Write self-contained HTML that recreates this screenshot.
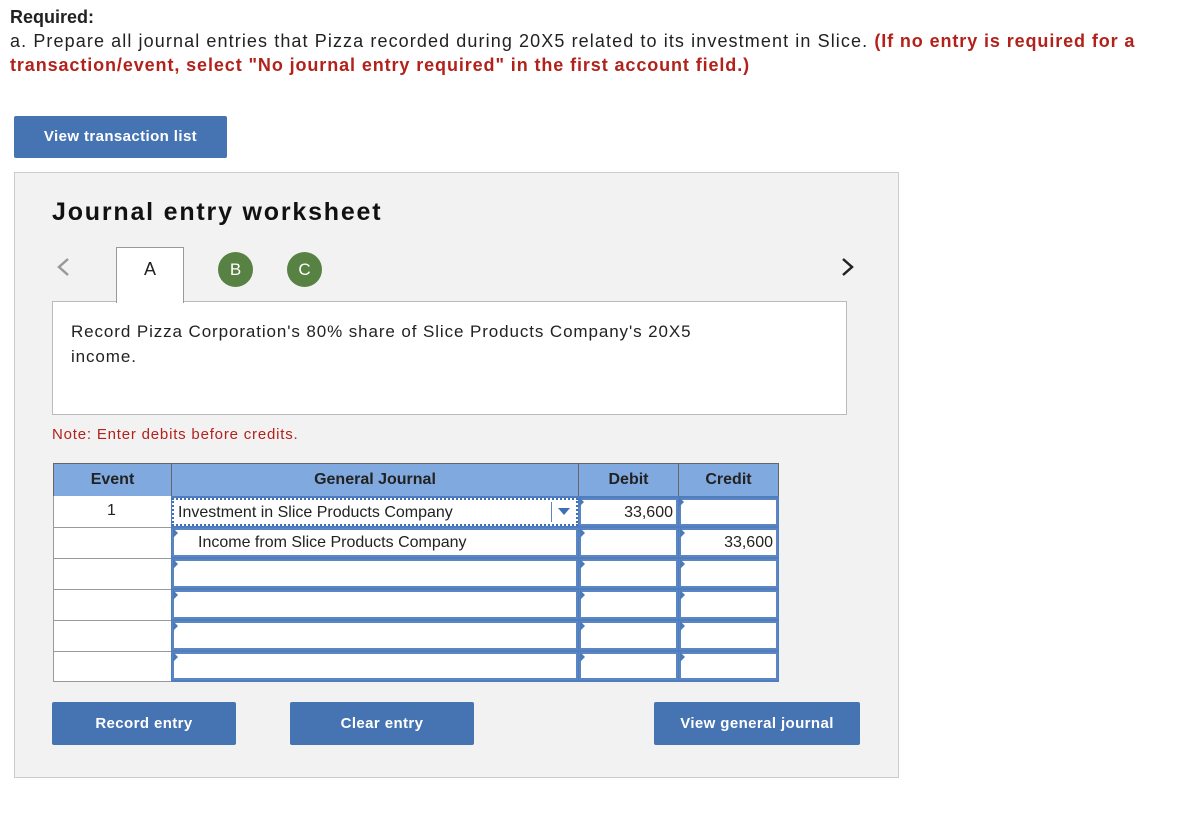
<!DOCTYPE html>
<html><head><style>
*{box-sizing:border-box;margin:0;padding:0}
body{width:1192px;height:818px;background:#fff;font-family:"Liberation Sans",sans-serif;position:relative;overflow:hidden;color:#222}
.a{position:absolute}
.req{left:10px;top:5px;font-size:18px;line-height:24px;letter-spacing:1.1px;white-space:nowrap}
.red{color:#b3211b;font-weight:bold;letter-spacing:0.9px}
.btn{background:#4674b3;color:#fff;font-weight:bold;font-size:15px;text-align:center;border-radius:2px;letter-spacing:0.4px}
.panel{left:14px;top:172px;width:885px;height:606px;background:#f2f2f2;border:1px solid #ccc}
.inp{position:absolute;background:#fff;border:2px solid #5b86c4;font-size:16px;line-height:26px}
.tri{position:absolute;width:0;height:0;border-top:5px solid transparent;border-bottom:5px solid transparent;border-left:5px solid #4a7ab8}
.hd{position:absolute;top:463px;height:34px;background:#80aadf;border:1px solid #666;font-weight:bold;font-size:16px;text-align:center;line-height:32px}
</style></head><body>
<div class="a req"><b style="letter-spacing:0">Required:</b><br>a. Prepare all journal entries that Pizza recorded during 20X5 related to its investment in Slice. <span class="red">(If no entry is required for a</span><br><span class="red">transaction/event, select "No journal entry required" in the first account field.)</span></div>
<div class="a btn" style="left:14px;top:116px;width:213px;height:42px;line-height:42px">View transaction list</div>
<div class="a panel"></div>
<div class="a" style="left:52px;top:198px;font-size:25px;font-weight:bold;color:#111;letter-spacing:1.8px">Journal entry worksheet</div>
<svg class="a" style="left:55px;top:257px" width="16" height="20"><path d="M13 2 L4 10 L13 18" fill="none" stroke="#999" stroke-width="2.5"/></svg>
<svg class="a" style="left:840px;top:257px" width="16" height="20"><path d="M3 2 L12 10 L3 18" fill="none" stroke="#222" stroke-width="2.5"/></svg>
<div class="a" style="left:52px;top:301px;width:795px;height:114px;background:#fff;border:1px solid #bbb"></div>
<div class="a" style="left:116px;top:247px;width:68px;height:56px;background:#fff;border:1px solid #999;border-bottom:none;text-align:center;line-height:42px;font-size:18px">A</div>
<div class="a" style="left:218px;top:252px;width:35px;height:35px;border-radius:50%;background:#588144;color:#fff;text-align:center;line-height:35px;font-size:17px">B</div>
<div class="a" style="left:287px;top:252px;width:35px;height:35px;border-radius:50%;background:#588144;color:#fff;text-align:center;line-height:35px;font-size:17px">C</div>
<div class="a" style="left:71px;top:319px;font-size:17px;line-height:25px;letter-spacing:0.9px;white-space:nowrap">Record Pizza Corporation's 80% share of Slice Products Company's 20X5<br>income.</div>
<div class="a" style="left:52px;top:426px;font-size:15px;color:#b3211b;letter-spacing:0.8px">Note: Enter debits before credits.</div>

<div class="hd" style="left:53px;width:119px">Event</div>
<div class="hd" style="left:171px;width:408px">General Journal</div>
<div class="hd" style="left:578px;width:101px">Debit</div>
<div class="hd" style="left:678px;width:101px">Credit</div>

<div class="a" style="left:53px;top:496px;width:119px;height:186px;background:#fff;border:1px solid #999;border-top:none"></div>
<div class="a" style="left:53px;top:527px;width:119px;height:1px;background:#999"></div>
<div class="a" style="left:53px;top:558px;width:119px;height:1px;background:#999"></div>
<div class="a" style="left:53px;top:589px;width:119px;height:1px;background:#999"></div>
<div class="a" style="left:53px;top:620px;width:119px;height:1px;background:#999"></div>
<div class="a" style="left:53px;top:651px;width:119px;height:1px;background:#999"></div>
<div class="a" style="left:107px;top:502px;font-size:16px">1</div>

<div class="a" style="left:171px;top:496px;width:608px;height:186px;background:#4f7dbd"></div>

<div class="inp" style="left:172px;top:498px;width:406px;height:28px;border:2px dotted #3f6fb5;padding-left:4px">Investment in Slice Products Company</div>
<div class="a" style="left:551px;top:502px;width:1px;height:20px;background:#5b86c4"></div>
<div class="a" style="left:558px;top:508px;border-left:6px solid transparent;border-right:6px solid transparent;border-top:7px solid #3f6fb5"></div>
<div class="inp" style="left:579px;top:498px;width:99px;height:28px;text-align:right;padding-right:3px">33,600</div>
<div class="inp" style="left:679px;top:498px;width:99px;height:28px"></div>
<div class="inp" style="left:172px;top:528px;width:406px;height:29px;padding-left:24px">Income from Slice Products Company</div>
<div class="inp" style="left:579px;top:528px;width:99px;height:29px"></div>
<div class="inp" style="left:679px;top:528px;width:99px;height:29px;text-align:right;padding-right:3px">33,600</div>
<div class="inp" style="left:172px;top:559px;width:406px;height:29px"></div>
<div class="inp" style="left:579px;top:559px;width:99px;height:29px"></div>
<div class="inp" style="left:679px;top:559px;width:99px;height:29px"></div>
<div class="inp" style="left:172px;top:590px;width:406px;height:29px"></div>
<div class="inp" style="left:579px;top:590px;width:99px;height:29px"></div>
<div class="inp" style="left:679px;top:590px;width:99px;height:29px"></div>
<div class="inp" style="left:172px;top:621px;width:406px;height:29px"></div>
<div class="inp" style="left:579px;top:621px;width:99px;height:29px"></div>
<div class="inp" style="left:679px;top:621px;width:99px;height:29px"></div>
<div class="inp" style="left:172px;top:652px;width:406px;height:28px"></div>
<div class="inp" style="left:579px;top:652px;width:99px;height:28px"></div>
<div class="inp" style="left:679px;top:652px;width:99px;height:28px"></div>
<div class="tri" style="left:579px;top:497px"></div><div class="tri" style="left:679px;top:497px"></div>
<div class="tri" style="left:173px;top:528px"></div><div class="tri" style="left:580px;top:528px"></div><div class="tri" style="left:680px;top:528px"></div>
<div class="tri" style="left:173px;top:559px"></div><div class="tri" style="left:580px;top:559px"></div><div class="tri" style="left:680px;top:559px"></div>
<div class="tri" style="left:173px;top:590px"></div><div class="tri" style="left:580px;top:590px"></div><div class="tri" style="left:680px;top:590px"></div>
<div class="tri" style="left:173px;top:621px"></div><div class="tri" style="left:580px;top:621px"></div><div class="tri" style="left:680px;top:621px"></div>
<div class="tri" style="left:173px;top:652px"></div><div class="tri" style="left:580px;top:652px"></div><div class="tri" style="left:680px;top:652px"></div>

<div class="a btn" style="left:52px;top:702px;width:184px;height:43px;line-height:43px">Record entry</div>
<div class="a btn" style="left:290px;top:702px;width:184px;height:43px;line-height:43px">Clear entry</div>
<div class="a btn" style="left:654px;top:702px;width:206px;height:43px;line-height:43px">View general journal</div>
</body></html>
